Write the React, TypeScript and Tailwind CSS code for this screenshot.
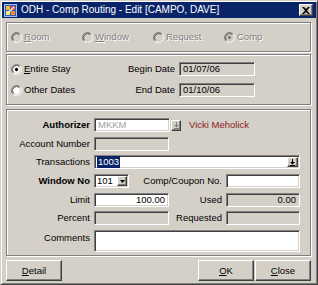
import React from "react";

const sunken =
  "border border-t-[#808080] border-l-[#808080] border-b-white border-r-white shadow-[inset_1px_1px_0_#404040,inset_-1px_-1px_0_#d4d0c8]";
const raised =
  "border border-t-white border-l-white border-b-[#404040] border-r-[#404040] shadow-[inset_-1px_-1px_0_#808080]";
const etched = "border border-[#808080] shadow-[inset_1px_1px_0_#fff,1px_1px_0_#fff]";

function Radio({ checked, disabled }: { checked?: boolean; disabled?: boolean }) {
  return (
    <svg width="11" height="11" viewBox="0 0 12 12" className="shrink-0">
      <circle cx="6" cy="6" r="4.5" fill={disabled ? "#d4d0c8" : "#fff"} />
      <path d="M2.11 9.89 A5.5 5.5 0 0 1 9.89 2.11" stroke="#808080" strokeWidth="1" fill="none" />
      <path d="M9.89 2.11 A5.5 5.5 0 0 1 2.11 9.89" stroke="#fff" strokeWidth="1" fill="none" />
      <path d="M2.82 9.18 A4.5 4.5 0 0 1 9.18 2.82" stroke="#404040" strokeWidth="1" fill="none" />
      <path d="M9.18 2.82 A4.5 4.5 0 0 1 2.82 9.18" stroke="#d4d0c8" strokeWidth="1" fill="none" />
      {checked && <circle cx="6" cy="6" r="1.8" fill={disabled ? "#808080" : "#000"} />}
    </svg>
  );
}

function DownBarIcon({ color }: { color: string }) {
  return (
    <svg width="7" height="7" viewBox="0 0 7 7">
      <path d="M3 0h1v3h2L3.5 5.5 1 3h2z" fill={color} />
      <rect x="1" y="6" width="5" height="1" fill={color} />
    </svg>
  );
}

function Label({ children, bold }: { children: React.ReactNode; bold?: boolean }) {
  return (
    <div className={`w-[83px] shrink-0 text-right whitespace-nowrap ${bold ? "font-bold" : ""}`}>
      {children}
    </div>
  );
}

export default function App() {
  return (
    <div className="w-[318px] h-[285px] bg-[#d4d0c8] font-['Liberation_Sans',Arial,sans-serif] text-[9.5px] leading-[12px] text-black overflow-hidden">
      <div className="w-full h-full border border-t-[#d4d0c8] border-l-[#d4d0c8] border-r-[#404040] border-b-[#404040] shadow-[inset_1px_1px_0_#fff,inset_-1px_-1px_0_#808080] p-[1px] flex flex-col">
        {/* Title bar */}
        <div className="h-[16px] bg-[#0a246a] flex items-center pl-[2px] pr-[2px] shrink-0">
          <svg width="13" height="13" viewBox="0 0 13 13" className="shrink-0">
            <rect x="0.5" y="0.5" width="12" height="12" fill="#2f5fb8" stroke="#9ec0ff" />
            <rect x="2" y="2" width="4" height="4" fill="#f7b531" />
            <rect x="7" y="2" width="4" height="4" fill="#e84a2a" />
            <rect x="2" y="7" width="4" height="4" fill="#f3e05a" />
            <rect x="7" y="7" width="4" height="4" fill="#ff8a1f" />
            <path d="M3 10 L10 3" stroke="#fff" strokeWidth="1.2" />
          </svg>
          <div className="ml-[4px] text-white text-[10px] leading-[12px] whitespace-nowrap flex-1">
            ODH - Comp Routing - Edit [CAMPO, DAVE]
          </div>
          <div className={`w-[14px] h-[12px] ${raised} flex items-center justify-center bg-[#d4d0c8] mr-[1px]`}>
            <svg width="8" height="7" viewBox="0 0 8 7">
              <path d="M0 0h2l2 2 2-2h2L5 3.5 8 7H6L4 5 2 7H0l3-3.5z" fill="#000" />
            </svg>
          </div>
        </div>

        {/* Group 1 */}
        <div className={`ml-[4px] mr-[5px] mt-[4px] h-[30px] ${etched} flex items-center pl-[4px] text-[#808080] [text-shadow:1px_1px_0_#fff]`}>
          <div className="w-[71px] flex items-center gap-[2px]">
            <Radio disabled />
            <span>
              <span className="underline">R</span>oom
            </span>
          </div>
          <div className="w-[71px] flex items-center gap-[2px]">
            <Radio disabled />
            <span>
              <span className="underline">W</span>indow
            </span>
          </div>
          <div className="w-[71px] flex items-center gap-[2px]">
            <Radio disabled />
            <span>Request</span>
          </div>
          <div className="w-[71px] flex items-center gap-[2px]">
            <Radio disabled checked />
            <span>Comp</span>
          </div>
        </div>

        {/* Group 2 */}
        <div className={`ml-[4px] mr-[5px] mt-[2px] h-[51px] ${etched} pt-[7px] pl-[4px] flex flex-col gap-[7px]`}>
          <div className="flex items-center h-[14px]">
            <div className="w-[115px] flex items-center gap-[2px]">
              <Radio checked />
              <span>
                <span className="underline">E</span>ntire Stay
              </span>
            </div>
            <div className="w-[49px] text-right whitespace-nowrap">Begin Date</div>
            <div className={`ml-[4px] w-[76px] h-[14px] ${sunken} px-[3px] flex items-center`}>01/07/06</div>
          </div>
          <div className="flex items-center h-[14px]">
            <div className="w-[115px] flex items-center gap-[2px]">
              <Radio />
              <span>Other Dates</span>
            </div>
            <div className="w-[49px] text-right whitespace-nowrap">End Date</div>
            <div className={`ml-[4px] w-[76px] h-[14px] ${sunken} px-[3px] flex items-center`}>01/10/06</div>
          </div>
        </div>

        {/* Group 3 */}
        <div className={`ml-[4px] mr-[5px] mt-[4px] h-[147px] ${etched} pt-[8px] pr-[10px] flex flex-col`}>
          <div className="flex items-center h-[14px]">
            <Label bold>Authorizer</Label>
            <div className={`ml-[4px] w-[76px] h-[14px] ${sunken} bg-white px-[3px] flex items-center text-[#a0a0a0]`}>
              MKKM
            </div>
            <div className={`ml-[1px] w-[10px] h-[11px] ${raised} flex items-center justify-center`}>
              <DownBarIcon color="#808080" />
            </div>
            <div className="ml-[8px] text-[#8b1c1c] whitespace-nowrap">Vicki Meholick</div>
          </div>

          <div className="flex items-center h-[14px] mt-[5px]">
            <Label>Account Number</Label>
            <div className={`ml-[4px] w-[75px] h-[14px] ${sunken}`} />
          </div>

          <div className="flex items-center h-[14px] mt-[4px]">
            <Label>Transactions</Label>
            <div className={`ml-[4px] flex-1 h-[14px] ${sunken} bg-white pl-[2px] pr-[1px] flex items-center`}>
              <span className="bg-[#0a246a] text-white px-[1px]">1003</span>
              <div className="flex-1" />
              <div className={`w-[11px] h-[10px] ${raised} bg-[#d4d0c8] flex items-center justify-center`}>
                <DownBarIcon color="#000" />
              </div>
            </div>
          </div>

          <div className="flex items-center h-[14px] mt-[5px]">
            <Label bold>Window No</Label>
            <div className={`ml-[4px] w-[35px] h-[14px] ${sunken} bg-white pl-[2px] pr-[1px] flex items-center`}>
              <span className="flex-1">101</span>
              <div className={`w-[10px] h-[10px] ${raised} bg-[#d4d0c8] flex items-center justify-center`}>
                <svg width="5" height="3" viewBox="0 0 5 3">
                  <path d="M0 0h5L2.5 3z" fill="#000" />
                </svg>
              </div>
            </div>
            <div className="flex-1 text-right whitespace-nowrap">Comp/Coupon No.</div>
            <div className={`ml-[4px] w-[74px] h-[14px] ${sunken} bg-white`} />
          </div>

          <div className="flex items-center h-[14px] mt-[5px]">
            <Label>Limit</Label>
            <div className={`ml-[4px] w-[75px] h-[14px] ${sunken} bg-white px-[3px] flex items-center justify-end`}>
              100.00
            </div>
            <div className="flex-1 text-right whitespace-nowrap">Used</div>
            <div className={`ml-[4px] w-[74px] h-[14px] ${sunken} px-[3px] flex items-center justify-end`}>
              0.00
            </div>
          </div>

          <div className="flex items-center h-[14px] mt-[4px]">
            <Label>Percent</Label>
            <div className={`ml-[4px] w-[75px] h-[14px] ${sunken}`} />
            <div className="flex-1 text-right whitespace-nowrap">Requested</div>
            <div className={`ml-[4px] w-[74px] h-[14px] ${sunken}`} />
          </div>

          <div className="flex items-start h-[22px] mt-[5px]">
            <div className="pt-[2px]">
              <Label>Comments</Label>
            </div>
            <div className={`ml-[4px] flex-1 h-[22px] ${sunken} bg-white`} />
          </div>
        </div>

        {/* Buttons */}
        <div className="flex items-center ml-[4px] mr-[5px] mt-[4px]">
          <div className={`w-[56px] h-[21px] ${raised} flex items-center justify-center`}>
            <span>
              <span className="underline">D</span>etail
            </span>
          </div>
          <div className="flex-1" />
          <div className={`w-[56px] h-[21px] ${raised} flex items-center justify-center`}>
            <span>
              <span className="underline">O</span>K
            </span>
          </div>
          <div className={`ml-[1px] w-[56px] h-[21px] ${raised} flex items-center justify-center`}>
            <span>
              <span className="underline">C</span>lose
            </span>
          </div>
        </div>
      </div>
    </div>
  );
}
